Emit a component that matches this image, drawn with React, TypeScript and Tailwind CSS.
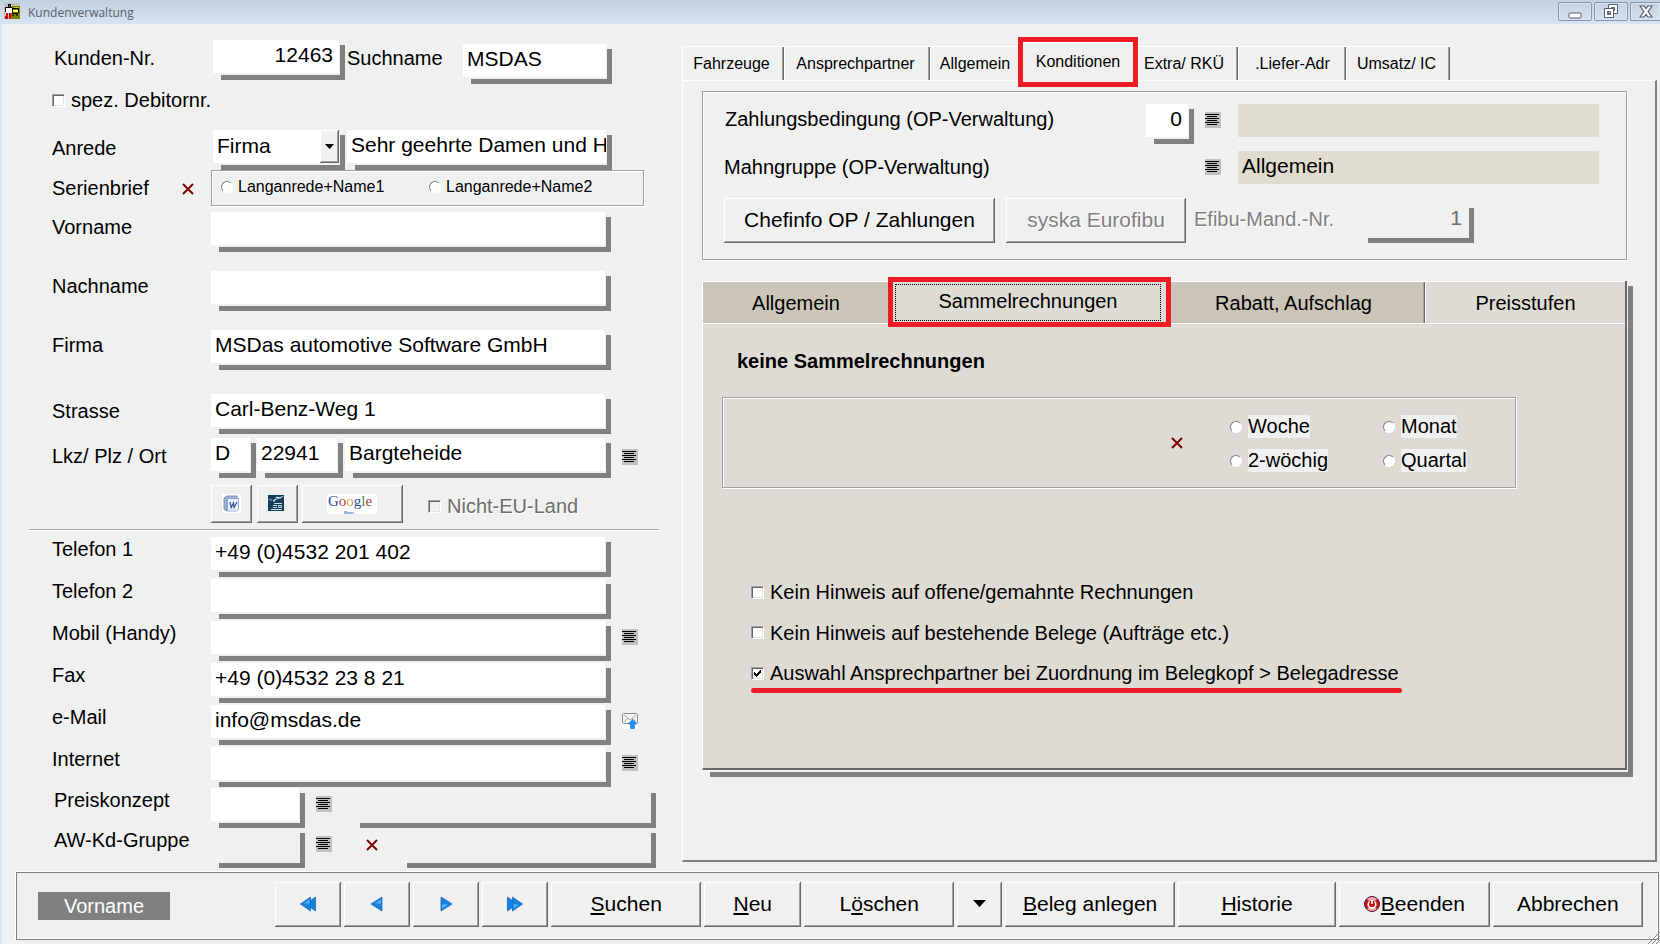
import type { ReactNode } from 'react'
import clsx from 'clsx'

const BEVEL =
  'shadow-[inset_-1px_-1px_#696969,inset_1px_1px_#ffffff,inset_-2px_-2px_#a0a0a0]'
const ETCHED = 'border border-[#a0a0a0] shadow-[1px_1px_#ffffff,inset_1px_1px_#ffffff]'
const DROP =
  'bg-[linear-gradient(#808080,#808080)] bg-no-repeat bg-[position:100%_100%] bg-[length:calc(100%_-_8px)_calc(100%_-_5px)] pr-[5px] pb-[5px]'

function Drop({ className, children }: { className?: string; children: ReactNode }) {
  return (
    <div className={clsx(DROP, 'h-10 shrink-0', className)}>
      <div className="relative h-full bg-[#f0f0f0] pr-px pb-[2px]">{children}</div>
    </div>
  )
}

type FieldProps = {
  id: string
  value?: string
  name?: string
  className?: string
  right?: boolean
  blank?: boolean
  disabled?: boolean
}

function Field({ id, value = '', name, className, right, blank, disabled }: FieldProps) {
  return (
    <Drop className={className}>
      <input
        id={id}
        aria-label={name}
        defaultValue={value}
        disabled={disabled}
        className={clsx(
          'block h-full w-full pb-[3px] text-[21px] outline-none',
          right ? 'pr-[6px] text-right' : 'pl-1',
          blank ? 'bg-transparent' : 'bg-white',
          disabled && 'text-[#6d6d6d]'
        )}
      />
    </Drop>
  )
}

function Label({ htmlFor, className, children }: { htmlFor: string; className?: string; children: ReactNode }) {
  return (
    <label htmlFor={htmlFor} className={clsx('shrink-0 whitespace-nowrap', className)}>
      {children}
    </label>
  )
}

function ListButton({ name, className }: { name: string; className?: string }) {
  return (
    <button type="button" aria-label={name} className={clsx('h-4 w-4 shrink-0', className)}>
      <svg width="16" height="16" shapeRendering="crispEdges">
        <rect width="16" height="16" fill="#c0c0c0" />
        <path d="M0 2h14v1H0zM2 4h10v1H2zM0 6h14v1H0zM2 8h10v1H2zM0 10h14v1H0zM2 12h10v1H2z" fill="#000" />
      </svg>
    </button>
  )
}

function ClearButton({ name, className }: { name: string; className?: string }) {
  return (
    <button type="button" aria-label={name} className={clsx('h-3 w-3 shrink-0', className)}>
      <svg width="12" height="12" viewBox="0 0 12 12">
        <path d="M1 1l10 10M11 1L1 11" stroke="#800000" strokeWidth="2" />
      </svg>
    </button>
  )
}

function Check({ id, checked, disabled }: { id: string; checked?: boolean; disabled?: boolean }) {
  return (
    <span className="relative h-[13px] w-[13px] shrink-0">
      <input
        id={id}
        type="checkbox"
        defaultChecked={checked}
        disabled={disabled}
        className={clsx(
          'peer block h-[13px] w-[13px] appearance-none border border-t-[#a0a0a0] border-r-white border-b-white border-l-[#a0a0a0] shadow-[inset_1px_1px_#696969,inset_-1px_-1px_#e3e3e3]',
          disabled ? 'bg-[#f0f0f0]' : 'bg-white'
        )}
      />
      <svg
        width="13"
        height="13"
        shapeRendering="crispEdges"
        className="pointer-events-none absolute inset-0 hidden peer-checked:block"
      >
        <path d="M3 5h1v3H3zM4 6h1v3H4zM5 7h1v3H5zM6 6h1v3H6zM7 5h1v3H7zM8 4h1v3H8zM9 3h1v3H9z" fill="#000" />
      </svg>
    </span>
  )
}

function Radio({ id, name }: { id: string; name: string }) {
  return (
    <input
      id={id}
      type="radio"
      name={name}
      className="h-3 w-3 shrink-0 appearance-none rounded-full border border-t-[#808080] border-r-white border-b-white border-l-[#808080] bg-white checked:bg-[radial-gradient(#000_30%,#fff_35%)]"
    />
  )
}

function Button({ className, disabled, name, children }: { className?: string; disabled?: boolean; name?: string; children: ReactNode }) {
  return (
    <button
      type="button"
      aria-label={name}
      disabled={disabled}
      className={clsx(
        'flex items-center justify-center bg-[#f0f0f0] pb-[2px] text-[21px] whitespace-nowrap',
        BEVEL,
        disabled && 'text-[#808080] [text-shadow:1px_1px_#ffffff]',
        className
      )}
    >
      {children}
    </button>
  )
}

function AppIcon() {
  return (
    <svg width="16" height="16" shapeRendering="crispEdges">
      <rect width="16" height="16" fill="#c0c0c0" />
      <path d="M8 3h8v13H7V9z" fill="#808000" />
      <path d="M4 1h3v3H4zM1 4h7v1H1zM1 5h1v4H1zM8 5h1v4H8z" fill="#000" />
      <path d="M5 2h1v2H5z" fill="#808000" />
      <path d="M2 5h6v5H2z" fill="#fff" />
      <path d="M2 10h2v6H1v-3h1zM5 10h2v6H5z" fill="#e00000" />
      <path d="M9 5h6v1H9zM8 8h1v2H8zM9 10h5v1H9zM14 6h1v4h-1z" fill="#000" />
      <path d="M9 7h5v2H9z" fill="#ffff60" />
      <path d="M10 4h5v1h-5z" fill="#c8c840" />
      <path d="M8 11h2v2H8zM12 11h2v2h-2z" fill="#303000" />
    </svg>
  )
}

function TitleBar() {
  const control =
    'flex h-[19px] items-center justify-center border border-[#8593b0] shadow-[inset_0_0_0_1px_#dbe5f0]'
  return (
    <header className="flex h-6 items-start bg-linear-to-b from-[#c2cfdc] to-[#d8e4f1] pl-[2px]">
      <span className="mt-[3px] ml-[2px]">
        <AppIcon />
      </span>
      <h1 className="ml-2 font-['Open_Sans','Noto_Sans',sans-serif] text-xs leading-[25px] text-[#58616c]">
        Kundenverwaltung
      </h1>
      <div className="mt-[2px] ml-auto flex gap-[2px]">
        <button type="button" aria-label="Minimieren" className={clsx(control, 'w-[34px] rounded-[2px]')}>
          <svg width="14" height="14">
            <rect x="1" y="8" width="12" height="5" rx="1" fill="#fff" stroke="#555c6e" />
          </svg>
        </button>
        <button type="button" aria-label="Wiederherstellen" className={clsx(control, 'w-[34px] rounded-[2px]')}>
          <svg width="16" height="16" fill="#fff" stroke="#555c6e">
            <path d="M5.500 .5h9v9h-9z M8.500 3.500h3v3h-3z" fillRule="evenodd" />
            <path d="M1.500 4.500h9v9h-9z M4.500 7.500h3v3h-3z" fillRule="evenodd" />
          </svg>
        </button>
        <button type="button" aria-label="Schließen" className={clsx(control, 'w-[30px] rounded-l-[2px] border-r-0')}>
          <svg width="14" height="13" viewBox="0 0 14 13">
            <path
              d="M1 1h4l2 2.500 2-2.500h4L9.200 6.500 13 12H9L7 9.500 5 12H1l3.800-5.500z"
              fill="#fff"
              stroke="#555c6e"
              strokeWidth="1.200"
            />
          </svg>
        </button>
      </div>
    </header>
  )
}

function WordIcon() {
  return (
    <svg width="19" height="19" viewBox="0 0 19 19">
      <rect width="19" height="19" fill="#fff" />
      <path d="M2 4l3-2h10v3H5v12l-3-2z" fill="#a9b9dc" stroke="#5a74ae" strokeWidth=".8" />
      <path d="M5.500 4.500h11v11l-2 1.500h-9z" fill="#eef2fb" stroke="#8296c4" strokeWidth=".8" />
      <path d="M8 8l1.200 5.500L11.500 9l.6 4.500L15 8" fill="none" stroke="#3a599f" strokeWidth="1.300" />
    </svg>
  )
}

function WriterIcon() {
  return (
    <svg width="16" height="16" viewBox="0 0 16 16">
      <rect width="16" height="16" fill="#123c5c" />
      <path d="M0 5c3-1 4 0 5 1 1-2 4-3 6-2-3 0-4 1-5 3C4 5 2 5 0 5z" fill="#fff" />
      <path d="M7 3c2-2 4-1 5-.5C13 1 15 1 16 1c-2 1-3 2-4 3-1-1-3-1-5-1z" fill="#dce8f0" />
      <path d="M6 8.500h8M5 10.500h4M5 12.500h4M3 14.500h11M10.500 10.500h3v2h-3z" fill="none" stroke="#c7dbe8" />
    </svg>
  )
}

function GoogleLogo() {
  return (
    <svg width="50" height="20" viewBox="0 0 50 20" fontFamily="'Liberation Serif', serif">
      <rect width="50" height="20" fill="#fff" />
      <text x="1" y="12" fontSize="15">
        <tspan fill="#2b4b9b">G</tspan>
        <tspan fill="#b03a3a">o</tspan>
        <tspan fill="#c9a640">o</tspan>
        <tspan fill="#2b4b9b">g</tspan>
        <tspan fill="#3f8a4a">l</tspan>
        <tspan fill="#b03a3a">e</tspan>
      </text>
      <text x="17" y="20" fontSize="4" fontWeight="700" fill="#5a7cc0" fontFamily="'Liberation Sans', sans-serif">
        Maps
      </text>
    </svg>
  )
}

function MailIcon() {
  return (
    <svg width="16" height="16" viewBox="0 0 16 16">
      <rect width="16" height="16" fill="#fff" />
      <rect x=".5" y=".5" width="15" height="10" rx="1" fill="#f1f1f1" stroke="#8a8a8a" />
      <path d="M2 2l6 5 6-5M2 9l4-4M14 9l-4-4" fill="none" stroke="#a9a9a9" />
      <path d="M10.500 6.500l4.500 4.500h-2.500v4.500h-4V11H6z" fill="#1e90f5" stroke="#1271cc" strokeWidth=".6" />
    </svg>
  )
}

function PowerIcon() {
  return (
    <svg width="16" height="16" viewBox="0 0 16 16">
      <circle cx="8" cy="8" r="7.500" fill="#c81414" stroke="#3a1c50" />
      <path d="M3 3a7 7 0 0 1 10 0l-2 2H5zM3 13a7 7 0 0 0 10 0l-2-2H5z" fill="#f3a5a5" />
      <path d="M5.500 5.500a3.800 3.800 0 1 0 5 0M8 4v4" fill="none" stroke="#fff" strokeWidth="1.600" />
    </svg>
  )
}

function NavIcon({ double, flip }: { double?: boolean; flip?: boolean }) {
  return (
    <svg width="16" height="16" viewBox="0 0 16 16" className={flip ? 'rotate-180' : undefined}>
      <g fill="#1583e0" stroke="#1668b8" strokeWidth=".8">
        {double && <path d="M15.500 1v14L6 8z" />}
        <path d={double ? 'M10.500 1v14L.5 8z' : 'M13 1v14L2 8z'} />
      </g>
      <path d={double ? 'M9.500 3.500v4H4z' : 'M12 3.500v4H6z'} fill="#53b4f5" />
    </svg>
  )
}

const CONTACTS = [
  { id: 'tel1', label: 'Telefon 1', value: '+49 (0)4532 201 402' },
  { id: 'tel2', label: 'Telefon 2', value: '' },
  { id: 'mobil', label: 'Mobil (Handy)', value: '', list: true },
  { id: 'fax', label: 'Fax', value: '+49 (0)4532 23 8 21' },
  { id: 'mail', label: 'e-Mail', value: 'info@msdas.de', mail: true },
  { id: 'web', label: 'Internet', value: '', list: true },
]

function CustomerForm() {
  return (
    <form className="w-[680px] shrink-0 pt-4 pl-[50px]">
      <div className="flex items-start">
        <Label htmlFor="kdnr" className="w-[161px] pl-[2px] leading-9">Kunden-Nr.</Label>
        <Field id="kdnr" value="12463" right className="w-[132px]" />
        <Label htmlFor="suchname" className="w-[118px] pl-[2px] leading-9">Suchname</Label>
        <Field id="suchname" value="MSDAS" className="mt-1 w-[149px]" />
      </div>

      <div className="mt-1 flex h-6 items-center gap-[6px]">
        <Check id="debitor" />
        <Label htmlFor="debitor">spez. Debitornr.</Label>
      </div>

      <div className="mt-[18px] flex items-start">
        <Label htmlFor="anrede" className="w-[161px] leading-9">Anrede</Label>
        <Drop className="w-[132px]">
          <select id="anrede" className="block h-full w-full appearance-none bg-white px-1 pb-1 text-[21px] outline-none">
            <option>Firma</option>
          </select>
          <span className={clsx('pointer-events-none absolute top-0 right-px flex h-[33px] w-[19px] items-center justify-center bg-[#f0f0f0]', BEVEL)}>
            <svg width="9" height="5">
              <path d="M0 0h9L4.500 5z" />
            </svg>
          </span>
        </Drop>
        <Field id="briefanrede" name="Briefanrede" value="Sehr geehrte Damen und H" className="ml-[2px] w-[265px]" />
      </div>

      <div className="flex items-start">
        <span className="w-[130px] leading-9">Serienbrief</span>
        <ClearButton name="Serienbrief löschen" className="mt-[13px] mr-[17px]" />
        <div className={clsx('flex h-9 w-[433px] items-center pb-[2px] pl-[9px] text-base', ETCHED)}>
          <Radio id="lang1" name="serienbrief" />
          <Label htmlFor="lang1" className="ml-[5px] w-[191px]">Langanrede+Name1</Label>
          <Radio id="lang2" name="serienbrief" />
          <Label htmlFor="lang2" className="ml-[5px]">Langanrede+Name2</Label>
        </div>
      </div>

      <div className="mt-[6px] flex flex-col gap-[19px]">
        <div className="flex items-start">
          <Label htmlFor="vorname" className="w-[159px] leading-[30px]">Vorname</Label>
          <Field id="vorname" className="w-[400px]" />
        </div>
        <div className="flex items-start">
          <Label htmlFor="nachname" className="w-[159px] leading-[30px]">Nachname</Label>
          <Field id="nachname" className="w-[400px]" />
        </div>
        <div className="flex items-start">
          <Label htmlFor="firma" className="w-[159px] leading-[30px]">Firma</Label>
          <Field id="firma" value="MSDas automotive Software GmbH" className="w-[400px]" />
        </div>
      </div>

      <div className="mt-6 flex items-start">
        <Label htmlFor="strasse" className="w-[159px] leading-[34px]">Strasse</Label>
        <Field id="strasse" value="Carl-Benz-Weg 1" className="w-[400px]" />
      </div>
      <div className="mt-1 flex items-start">
        <Label htmlFor="lkz" className="w-[159px] leading-9">Lkz/ Plz / Ort</Label>
        <Field id="lkz" value="D" className="w-[45px]" />
        <Field id="plz" name="Plz" value="22941" className="ml-px w-[86px]" />
        <Field id="ort" name="Ort" value="Bargteheide" className="ml-[2px] w-[266px]" />
        <ListButton name="Orte" className="mt-[11px] ml-[11px]" />
      </div>

      <div className="mt-[7px] flex items-center pl-[159px]">
        <Button name="Word" className="h-[38px] w-[41px]"><WordIcon /></Button>
        <Button name="Writer" className="ml-[5px] h-[38px] w-[41px] pr-[3px]"><WriterIcon /></Button>
        <Button name="Google Maps" className="ml-1 h-[38px] w-[101px] pt-[2px] pr-[2px]"><GoogleLogo /></Button>
        <div className="ml-[25px] flex items-center gap-[6px] pt-1 text-[#6d6d6d] [text-shadow:1px_1px_#ffffff]">
          <Check id="nichteu" disabled />
          <Label htmlFor="nichteu">Nicht-EU-Land</Label>
        </div>
      </div>

      <hr className="mt-[6px] mr-[23px] -ml-[23px] border-t border-[#a0a0a0] shadow-[0_1px_#ffffff]" />

      <div className="mt-[7px] flex flex-col gap-[2px]">
        {CONTACTS.map((row) => (
          <div key={row.id} className="flex items-start">
            <Label htmlFor={row.id} className="w-[159px] leading-6">{row.label}</Label>
            <Field id={row.id} value={row.value} className="w-[400px]" />
            {row.list && <ListButton name={row.label} className="mt-2 ml-[11px]" />}
            {row.mail && (
              <button type="button" aria-label="e-Mail senden" className="mt-2 ml-[11px]">
                <MailIcon />
              </button>
            )}
          </div>
        ))}
      </div>
      <div className="mt-px flex items-start">
        <Label htmlFor="preis" className="w-[159px] pl-[2px] leading-6">Preiskonzept</Label>
        <Field id="preis" className="w-[94px]" />
        <ListButton name="Preiskonzepte" className="mt-2 ml-[11px]" />
        <Field id="preistext" name="Preiskonzept Text" blank className="ml-5 w-[304px]" />
      </div>
      <div className="flex items-start">
        <Label htmlFor="awgruppe" className="w-[159px] pl-[2px] leading-6">AW-Kd-Gruppe</Label>
        <Field id="awgruppe" blank className="w-[94px]" />
        <ListButton name="AW-Kd-Gruppen" className="mt-2 ml-[11px]" />
        <ClearButton name="AW-Kd-Gruppe löschen" className="mt-[11px] ml-[34px]" />
        <Field id="awtext" name="AW-Kd-Gruppe Text" blank className="ml-[21px] w-[257px]" />
      </div>
    </form>
  )
}

// red marker frame drawn on top of a tab
function Marker({ className }: { className: string }) {
  return <span className={clsx('pointer-events-none absolute z-10 border-[5px] border-[#ed1c24]', className)} />
}

const TAB =
  'flex h-[34px] shrink-0 items-center justify-center rounded-tl-[3px] border-t border-l border-white text-base whitespace-nowrap shadow-[inset_-1px_0_#696969,inset_-2px_0_#a0a0a0]'

function MainTabs() {
  return (
    <div role="tablist" className="flex items-end">
      <button type="button" role="tab" className={clsx(TAB, 'w-[102px] pr-1')}>Fahrzeuge</button>
      <button type="button" role="tab" className={clsx(TAB, 'w-[146px] pr-1')}>Ansprechpartner</button>
      <button type="button" role="tab" className={clsx(TAB, 'w-[93px] pr-1')}>Allgemein</button>
      <button
        type="button"
        role="tab"
        aria-selected="true"
        className="relative -mb-px flex h-[39px] w-[110px] shrink-0 items-center justify-center border-t border-white bg-[#f0f0f0] text-base"
      >
        Konditionen
        <Marker className="-inset-x-[5px] -top-[6px] -bottom-[6px]" />
      </button>
      <button type="button" role="tab" className={clsx(TAB, 'w-[105px] pr-1')}>Extra/ RKÜ</button>
      <button type="button" role="tab" className={clsx(TAB, 'w-[108px]')}>.Liefer-Adr</button>
      <button type="button" role="tab" className={clsx(TAB, 'w-[104px] pr-1')}>Umsatz/ IC</button>
    </div>
  )
}

function PaymentTerms() {
  return (
    <section className={clsx('mr-[6px] pt-3 pr-[27px] pb-4 pl-[21px]', ETCHED)}>
      <div className="flex items-start">
        <Label htmlFor="zahlung" className="w-[422px] pl-px leading-[30px]">Zahlungsbedingung (OP-Verwaltung)</Label>
        <Field id="zahlung" value="0" right className="w-12" />
        <ListButton name="Zahlungsbedingungen" className="mt-2 ml-[11px]" />
        <output className="ml-[17px] h-[33px] flex-1 bg-[#e0dcd0]" />
      </div>
      <div className="mt-[7px] flex items-start">
        <span className="w-[422px] shrink-0 leading-8">Mahngruppe (OP-Verwaltung)</span>
        <ListButton name="Mahngruppen" className="mt-2 ml-[59px]" />
        <output className="ml-[17px] h-[33px] flex-1 bg-[#e0dcd0] pl-1 text-[21px] leading-[30px]">Allgemein</output>
      </div>
      <div className="mt-[14px] flex items-start">
        <Button className="h-[45px] w-[271px]">Chefinfo OP / Zahlungen</Button>
        <Button disabled className="ml-[11px] h-[45px] w-[180px]">syska Eurofibu</Button>
        <Label htmlFor="mandant" className="ml-2 w-[166px] leading-[42px] text-[#808080] [text-shadow:1px_1px_#ffffff]">
          Efibu-Mand.-Nr.
        </Label>
        <Field id="mandant" value="1" right blank disabled className="mt-[5px] w-[114px]" />
      </div>
    </section>
  )
}

function IntervalRadio({ id, label }: { id: string; label: string }) {
  return (
    <div className="flex items-center">
      <Radio id={id} name="intervall" />
      <Label htmlFor={id} className="ml-[6px] bg-[#f0f0f0] leading-[23px]">{label}</Label>
    </div>
  )
}

const SUBTAB = 'flex h-[42px] items-center justify-center border-t border-white whitespace-nowrap'

function InvoiceTabs() {
  return (
    <section className={clsx(DROP, 'mt-[21px]')}>
      <div className="bg-[#f0f0f0] pr-px pb-[2px]">
        <div className="border-r-2 border-b-2 border-l border-r-[#696969] border-b-[#696969] border-l-white bg-[#dedbd5]">
          <div role="tablist" className="grid grid-cols-[190fr_273fr_259fr_200fr]">
            <button type="button" role="tab" className={clsx(SUBTAB, 'bg-[#cac5b8] pr-1')}>Allgemein</button>
            <button type="button" role="tab" aria-selected="true" className={clsx(SUBTAB, 'relative p-[2px] pr-[5px]')}>
              <span className="flex h-full w-full items-center justify-center border border-dotted border-black pb-1">
                Sammelrechnungen
              </span>
              <Marker className="-inset-x-[5px] -top-[5px] -bottom-1" />
            </button>
            <button
              type="button"
              role="tab"
              className={clsx(SUBTAB, 'bg-[#cac5b8] pr-1 shadow-[inset_-1px_0_#696969,inset_-2px_0_#a0a0a0]')}
            >
              Rabatt, Aufschlag
            </button>
            <button type="button" role="tab" className={clsx(SUBTAB, 'border-l')}>Preisstufen</button>
          </div>

          <div className="border-t border-white pt-[23px] pb-[75px] pl-[19px]">
            <h2 className="pl-[15px] leading-7 font-bold">keine Sammelrechnungen</h2>

            <div className={clsx('mt-[22px] mr-[109px] flex h-[91px] items-center', ETCHED)}>
              <ClearButton name="Intervall löschen" className="ml-auto" />
              <div className="mr-12 ml-[47px] grid grid-cols-[153px_84px] gap-y-[11px] pt-[2px]">
                <IntervalRadio id="woche" label="Woche" />
                <IntervalRadio id="monat" label="Monat" />
                <IntervalRadio id="zweiwoechig" label="2-wöchig" />
                <IntervalRadio id="quartal" label="Quartal" />
              </div>
            </div>

            <div className="mt-[84px] flex flex-col items-start pl-[29px]">
              <div className="flex h-10 items-center gap-[6px]">
                <Check id="offene" />
                <Label htmlFor="offene">Kein Hinweis auf offene/gemahnte Rechnungen</Label>
              </div>
              <div className="flex h-[41px] items-center gap-[6px]">
                <Check id="belege" />
                <Label htmlFor="belege">Kein Hinweis auf bestehende Belege (Aufträge etc.)</Label>
              </div>
              <div className="relative flex h-10 items-center gap-[6px] pr-[3px]">
                <Check id="auswahl" checked />
                <Label htmlFor="auswahl">Auswahl Ansprechpartner bei Zuordnung im Belegkopf &gt; Belegadresse</Label>
                <span className="absolute inset-x-0 bottom-0 h-[5px] rounded-full bg-[#ed1c24]" />
              </div>
            </div>
          </div>
        </div>
      </div>
    </section>
  )
}

function Toolbar() {
  return (
    <footer className="mt-1 mr-px mb-1 ml-[14px] flex items-start border border-[#808080] pt-[9px] pr-[15px] pb-3 pl-[21px] shadow-[-1px_-1px_#ffffff,inset_-1px_-1px_#ffffff]">
      <span className="mt-[10px] mr-[105px] w-[132px] shrink-0 bg-[#808080] text-center leading-7 text-white">Vorname</span>
      <div className="grid h-[45px] flex-1 grid-cols-[66px_66px_66px_66px_151fr_97fr_151fr_45px_170fr_159fr_151fr_151fr] gap-[3px]">
        <Button name="Erster"><NavIcon double /></Button>
        <Button name="Zurück"><NavIcon /></Button>
        <Button name="Weiter"><NavIcon flip /></Button>
        <Button name="Letzter"><NavIcon double flip /></Button>
        <Button><span><u>S</u>uchen</span></Button>
        <Button><span><u>N</u>eu</span></Button>
        <Button><span>L<u>ö</u>schen</span></Button>
        <Button name="Mehr">
          <svg width="13" height="7">
            <path d="M0 0h13L6.500 7z" />
          </svg>
        </Button>
        <Button><span><u>B</u>eleg anlegen</span></Button>
        <Button><span><u>H</u>istorie</span></Button>
        <Button><PowerIcon /><span className="ml-px"><u>B</u>eenden</span></Button>
        <Button>Abbrechen</Button>
      </div>
    </footer>
  )
}

export default function App() {
  return (
    <div className="relative flex min-h-screen flex-col overflow-hidden bg-[#f0f0f0] font-['Liberation_Sans',Arial,sans-serif] text-[20px] text-black">
      <TitleBar />
      <div className="flex flex-1 flex-col border-l-2 border-[#d8e4f1]">
        <main className="flex flex-1">
          <CustomerForm />
          <div className="mr-[3px] mb-[6px] flex min-w-0 flex-1 flex-col pt-[18px]">
            <MainTabs />
            <div className="flex-1 border-t border-r-2 border-b-2 border-l border-t-white border-r-[#808080] border-b-[#808080] border-l-white pt-[10px] pr-[22px] pl-[19px]">
              <PaymentTerms />
              <InvoiceTabs />
            </div>
          </div>
        </main>
        <Toolbar />
      </div>
      <svg width="12" height="12" className="absolute right-0 bottom-0" stroke="#808080">
        <path d="M0 12L12 0M4 12l8-8M8 12l4-4" />
      </svg>
    </div>
  )
}
